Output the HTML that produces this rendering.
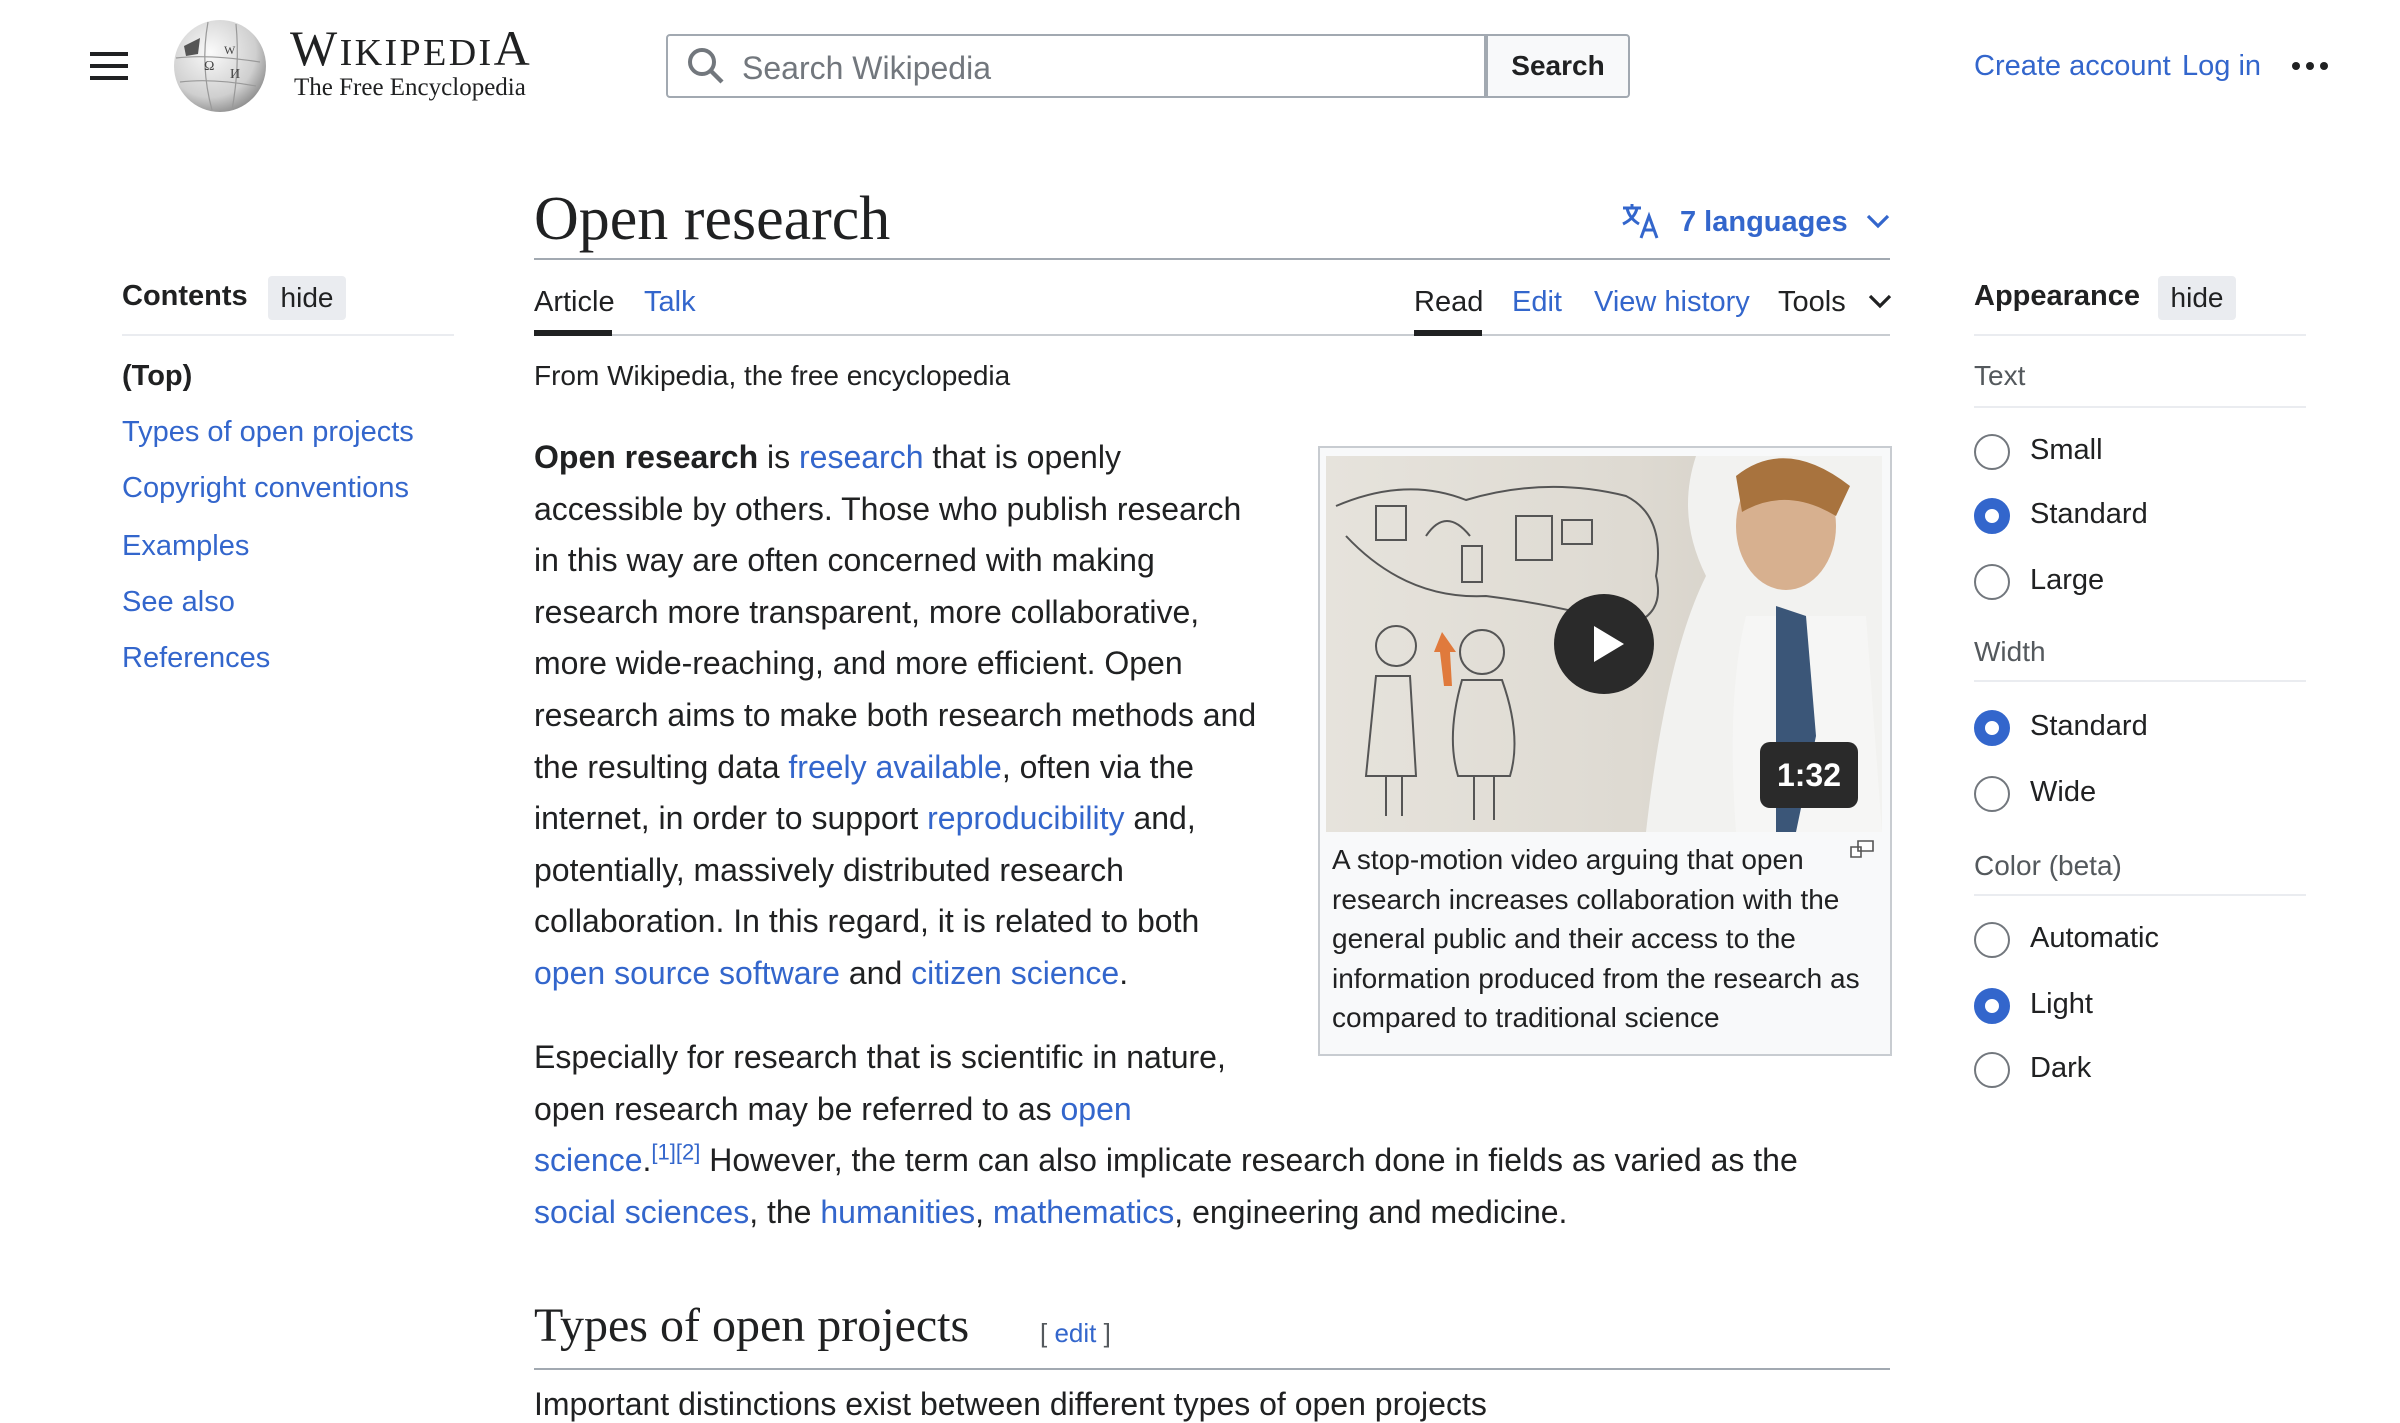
<!DOCTYPE html>
<html><head><meta charset="utf-8">
<style>
html{zoom:2}
body{margin:0;width:1200px;height:699px;overflow:hidden;background:#fff;font-family:"Liberation Sans",Arial,sans-serif;color:#202122;position:relative}
.a{position:absolute;white-space:nowrap}
a,.l{color:#3366cc;text-decoration:none}
.serif{font-family:"Liberation Serif",serif}
.btn{background:#eaecf0;border-radius:2px;font-size:14px;text-align:center;color:#202122}
.hr{position:absolute;height:1px;background:#c8ccd1}
.hr2{position:absolute;height:1px;background:#eaecf0}
.r{position:absolute;width:16px;height:16px;border:1px solid #72777d;border-radius:50%;background:#fff}
.r.on{border:5.5px solid #3366cc;width:7px;height:7px}
.rl{position:absolute;font-size:16px;white-space:nowrap}
p.body{position:absolute;margin:0;font-size:16px;line-height:25.8px;white-space:nowrap}
</style></head><body>
<!-- header -->
<div class="a" style="left:45px;top:26px;width:19px;height:2px;background:#202122;box-shadow:0 6px 0 #202122,0 12px 0 #202122"></div>
<svg class="a" style="left:84px;top:9px" width="52" height="48" viewBox="0 0 52 48">
<defs><radialGradient id="g" cx="40%" cy="35%" r="70%"><stop offset="0" stop-color="#fafafa"/><stop offset=".7" stop-color="#cfcfcf"/><stop offset="1" stop-color="#8a8a8a"/></radialGradient></defs>
<circle cx="26" cy="24" r="23" fill="url(#g)"/>
<path d="M8 14 L16 10 L15 18 L9 19Z" fill="#555"/>
<g stroke="#999" stroke-width=".6" fill="none"><path d="M4 20 Q20 18 46 22"/><path d="M6 32 Q22 30 44 34"/><path d="M20 2 Q16 24 22 46"/><path d="M34 3 Q36 24 32 46"/></g>
<text x="18" y="26" font-size="7" fill="#444" font-family="Liberation Serif">Ω</text><text x="28" y="18" font-size="6" fill="#444" font-family="Liberation Serif">W</text><text x="31" y="30" font-size="7" fill="#444" font-family="Liberation Serif">И</text>
</svg>
<div class="a serif" style="left:145px;top:11px;font-size:25px;letter-spacing:1.2px;line-height:26px">W<span style="font-size:19px">IKIPEDI</span>A</div>
<div class="a serif" style="left:147px;top:37px;font-size:12.5px">The Free Encyclopedia</div>
<div class="a" style="left:333px;top:17px;width:408px;height:30px;border:1px solid #a2a9b1;border-radius:2px 0 0 2px"></div>
<svg class="a" style="left:343px;top:23px" width="20" height="20" viewBox="0 0 20 20"><circle cx="8" cy="8" r="6" fill="none" stroke="#72777d" stroke-width="2"/><path d="M12.5 12.5 L18 18" stroke="#72777d" stroke-width="2.2"/></svg>
<div class="a" style="left:371px;top:25px;font-size:16px;color:#72777d">Search Wikipedia</div>
<div class="a" style="left:743px;top:17px;width:70px;height:30px;border:1px solid #a2a9b1;background:#f8f9fa;border-radius:0 2px 2px 0;font-size:14px;font-weight:bold;text-align:center;line-height:30px">Search</div>
<div class="a l" style="left:987px;top:25px;font-size:14.5px">Create account</div>
<div class="a l" style="left:1091px;top:25px;font-size:14.5px">Log in</div>
<div class="a" style="left:1146px;top:31px;width:4px;height:4px;border-radius:50%;background:#202122;box-shadow:7px 0 0 #202122,14px 0 0 #202122"></div>

<!-- title -->
<div class="a serif" style="left:267px;top:92px;font-size:31px">Open research</div>
<svg class="a" style="left:810px;top:101px" width="21" height="20" viewBox="0 0 20 20"><g fill="none" stroke="#3366cc" stroke-width="1.5"><path d="M1 3h9M5.5 1v2M3 3q1 5 6 8M8 3q-1 5 -7 8"/><path d="M10 18 L14 7 L18 18M11.5 14h5"/></g></svg>
<div class="a l" style="left:840px;top:103px;font-size:14.5px;font-weight:bold">7 languages</div>
<svg class="a" style="left:933px;top:106px" width="12" height="10" viewBox="0 0 12 10"><path d="M1 2 L6 7 L11 2" fill="none" stroke="#3366cc" stroke-width="1.6"/></svg>
<div class="hr" style="left:267px;top:129px;width:678px;background:#a2a9b1"></div>

<!-- tabs -->
<div class="a" style="left:267px;top:143px;font-size:14.5px">Article</div>
<div class="a l" style="left:322px;top:143px;font-size:14.5px">Talk</div>
<div class="a" style="left:707px;top:143px;font-size:14.5px">Read</div>
<div class="a l" style="left:756px;top:143px;font-size:14.5px">Edit</div>
<div class="a l" style="left:797px;top:143px;font-size:14.5px">View history</div>
<div class="a" style="left:889px;top:143px;font-size:14.5px">Tools</div>
<svg class="a" style="left:934px;top:146px" width="12" height="10" viewBox="0 0 12 10"><path d="M1 2 L6 7 L11 2" fill="none" stroke="#202122" stroke-width="1.6"/></svg>
<div class="hr" style="left:267px;top:167px;width:678px"></div>
<div class="a" style="left:267px;top:165px;width:39px;height:3px;background:#202122"></div>
<div class="a" style="left:707px;top:165px;width:34px;height:3px;background:#202122"></div>

<div class="a" style="left:267px;top:180px;font-size:14px">From Wikipedia, the free encyclopedia</div>

<p class="body" style="left:267px;top:216px"><b>Open research</b> is <a>research</a> that is openly<br>accessible by others. Those who publish research<br>in this way are often concerned with making<br>research more transparent, more collaborative,<br>more wide-reaching, and more efficient. Open<br>research aims to make both research methods and<br>the resulting data <a>freely available</a>, often via the<br>internet, in order to support <a>reproducibility</a> and,<br>potentially, massively distributed research<br>collaboration. In this regard, it is related to both<br><a>open source software</a> and <a>citizen science</a>.</p>

<p class="body" style="left:267px;top:516px">Especially for research that is scientific in nature,<br>open research may be referred to as <a>open</a><br><a>science</a>.<sup style="font-size:11px;line-height:0"><a>[1]</a><a>[2]</a></sup> However, the term can also implicate research done in fields as varied as the<br><a>social sciences</a>, the <a>humanities</a>, <a>mathematics</a>, engineering and medicine.</p>

<!-- figure -->
<div class="a" style="left:659px;top:223px;width:285px;height:303px;border:1px solid #c8ccd1;background:#f8f9fa"></div>
<div class="a" style="left:663px;top:228px;width:278px;height:188px;overflow:hidden;background:linear-gradient(90deg,#e6e3dc 0%,#dedad2 55%,#cfc9bf 100%)">
<svg width="278" height="188" viewBox="0 0 278 188" style="position:absolute;left:0;top:0">
<g fill="none" stroke="#555" stroke-width="1">
<path d="M5 25 Q40 10 70 22 Q110 10 150 20 Q170 30 165 60 Q170 80 150 85 Q120 75 80 70 Q40 72 10 40"/>
<rect x="25" y="25" width="15" height="17"/><rect x="95" y="30" width="18" height="22"/><rect x="118" y="32" width="15" height="12"/>
<path d="M50 40 Q60 25 72 40"/><rect x="68" y="45" width="10" height="18"/>
<circle cx="35" cy="95" r="10"/><path d="M25 110 L20 160 L45 160 L42 110Z"/><path d="M30 160 v20 M38 160 v20"/>
<circle cx="78" cy="98" r="11"/><path d="M68 112 Q60 140 66 160 L92 160 Q98 140 88 112Z"/><path d="M74 160 v22 M84 160 v22"/>
</g>
<path d="M58 88 L54 98 L57 98 L59 115 L63 115 L62 98 L65 98Z" fill="#e07a3c"/>
<path d="M185 0 Q175 30 190 60 Q170 100 160 188 L278 188 L278 0Z" fill="#f2f2f0"/>
<ellipse cx="230" cy="35" rx="25" ry="32" fill="#d7b08f"/>
<path d="M205 10 Q230 -10 262 15 L255 30 Q230 15 208 28Z" fill="#a8733e"/>
<path d="M210 80 Q200 120 205 188 L278 188 L270 80Z" fill="#f6f6f5" opacity=".9"/>
<path d="M225 75 L240 80 L245 140 L235 188 L225 188Z" fill="#3b5678"/>
</svg>
<div style="position:absolute;left:114px;top:69px;width:50px;height:50px;border-radius:50%;background:#2a2a2a"></div>
<svg style="position:absolute;left:131px;top:84px" width="20" height="20" viewBox="0 0 20 20"><path d="M3 1 L18 10 L3 19Z" fill="#fff"/></svg>
<div style="position:absolute;left:217px;top:143px;width:49px;height:33px;border-radius:5px;background:#2a2a2a;color:#fff;font-weight:bold;font-size:16px;text-align:center;line-height:33px">1:32</div>
</div>
<svg class="a" style="left:925px;top:420px" width="12" height="9" viewBox="0 0 12 9"><path d="M4 .5h7.5v5h-7.5zM.5 3.5h5v5h-5z" fill="#fff" stroke="#555" stroke-width=".8"/></svg>
<div class="a" style="left:666px;top:420px;font-size:14px;line-height:19.8px;white-space:nowrap">A stop-motion video arguing that open<br>research increases collaboration with the<br>general public and their access to the<br>information produced from the research as<br>compared to traditional science</div>

<!-- h2 -->
<div class="a serif" style="left:267px;top:649px;font-size:24px">Types of open projects</div>
<div class="a" style="left:520px;top:659px;font-size:13px;color:#54595d">[ <span class="l">edit</span> ]</div>
<div class="hr" style="left:267px;top:684px;width:678px;background:#a2a9b1"></div>
<div class="a" style="left:267px;top:693px;font-size:16px">Important distinctions exist between different types of open projects</div>

<!-- TOC -->
<div class="a" style="left:61px;top:140px;font-size:14.5px;font-weight:bold">Contents</div>
<div class="a btn" style="left:134px;top:138px;width:39px;height:22px;line-height:22px">hide</div>
<div class="hr2" style="left:61px;top:167px;width:166px"></div>
<div class="a" style="left:61px;top:180px;font-size:14.5px;font-weight:bold">(Top)</div>
<div class="a l" style="left:61px;top:208px;font-size:14.5px">Types of open projects</div>
<div class="a l" style="left:61px;top:236px;font-size:14.5px">Copyright conventions</div>
<div class="a l" style="left:61px;top:265px;font-size:14.5px">Examples</div>
<div class="a l" style="left:61px;top:293px;font-size:14.5px">See also</div>
<div class="a l" style="left:61px;top:321px;font-size:14.5px">References</div>

<!-- Appearance -->
<div class="a" style="left:987px;top:140px;font-size:14.5px;font-weight:bold">Appearance</div>
<div class="a btn" style="left:1079px;top:138px;width:39px;height:22px;line-height:22px">hide</div>
<div class="hr2" style="left:987px;top:167px;width:166px"></div>
<div class="a" style="left:987px;top:180px;font-size:14px;color:#54595d">Text</div>
<div class="hr2" style="left:987px;top:203px;width:166px"></div>
<div class="r" style="left:987px;top:217px"></div><div class="rl" style="left:1015px;top:217px;font-size:14.5px">Small</div>
<div class="r on" style="left:987px;top:249px"></div><div class="rl" style="left:1015px;top:249px;font-size:14.5px">Standard</div>
<div class="r" style="left:987px;top:282px"></div><div class="rl" style="left:1015px;top:282px;font-size:14.5px">Large</div>
<div class="a" style="left:987px;top:318px;font-size:14px;color:#54595d">Width</div>
<div class="hr2" style="left:987px;top:340px;width:166px"></div>
<div class="r on" style="left:987px;top:355px"></div><div class="rl" style="left:1015px;top:355px;font-size:14.5px">Standard</div>
<div class="r" style="left:987px;top:388px"></div><div class="rl" style="left:1015px;top:388px;font-size:14.5px">Wide</div>
<div class="a" style="left:987px;top:425px;font-size:14px;color:#54595d">Color (beta)</div>
<div class="hr2" style="left:987px;top:447px;width:166px"></div>
<div class="r" style="left:987px;top:461px"></div><div class="rl" style="left:1015px;top:461px;font-size:14.5px">Automatic</div>
<div class="r on" style="left:987px;top:494px"></div><div class="rl" style="left:1015px;top:494px;font-size:14.5px">Light</div>
<div class="r" style="left:987px;top:526px"></div><div class="rl" style="left:1015px;top:526px;font-size:14.5px">Dark</div>
</body></html>
